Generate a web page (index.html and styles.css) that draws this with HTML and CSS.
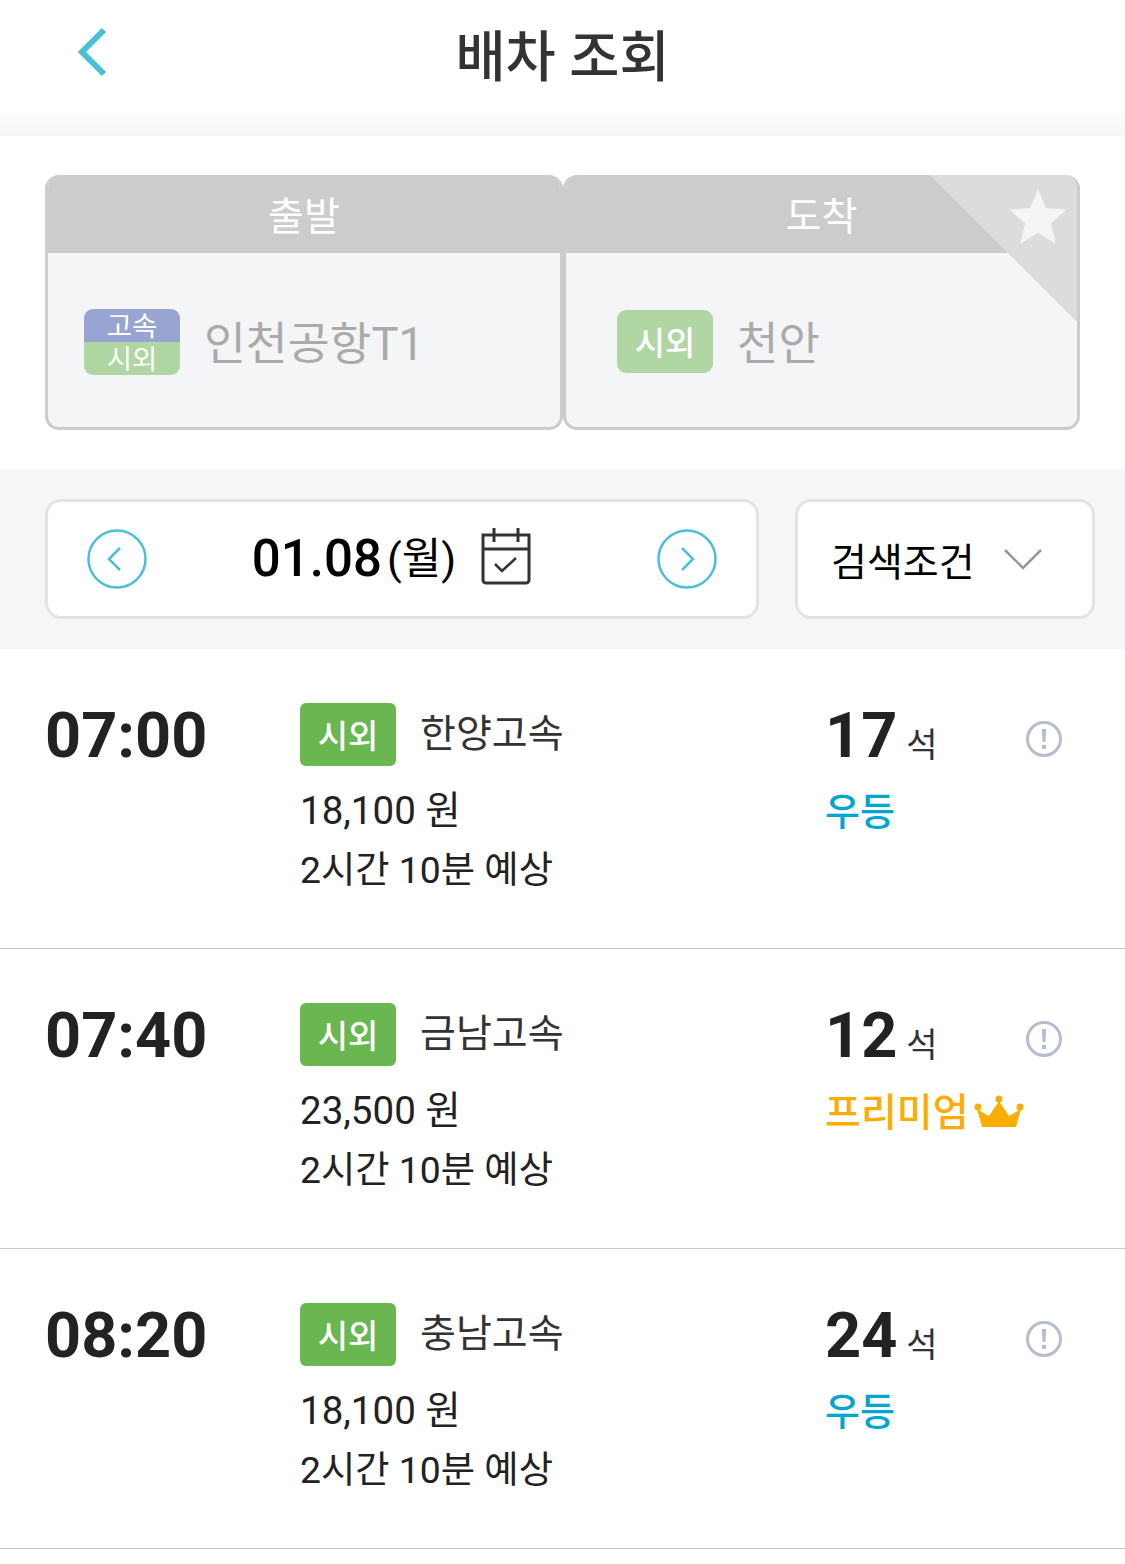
FILE: index.html
```html
<!DOCTYPE html>
<html lang="ko">
<head>
<meta charset="utf-8">
<title>배차 조회</title>
<link rel="stylesheet" href="styles.css">
</head>
<body>
<header class="topbar">
  <svg class="back" viewBox="0 0 30 50" width="30" height="50"><path d="M27 3 5 25l22 22" fill="none" stroke="#4bbfd8" stroke-width="6"/></svg>
  <h1 class="title">배차 조회</h1>
</header>
<section class="route">
  <div class="card">
    <div class="card-head">출발</div>
    <div class="card-body depart">
      <div class="dual"><span class="dual-top">고속</span><span class="dual-bot">시외</span></div>
      <span class="place">인천공항T1</span>
    </div>
  </div>
  <div class="card">
    <div class="card-head">도착</div>
    <div class="card-body arrive">
      <span class="light-badge">시외</span>
      <span class="place">천안</span>
    </div>
    <div class="corner"></div>
    <svg class="star" viewBox="0 0 56 54" width="56" height="54"><path d="M28 1l7.600 18.500 19.900 1.700-15.100 13 4.500 19.500L28 43.500 11.100 53.700l4.500-19.500-15.100-13 19.900-1.700z" fill="#f4f5f7" stroke="#f4f5f7" stroke-width="1" stroke-linejoin="round"/></svg>
  </div>
</section>
<section class="datebar">
  <div class="datebox">
    <svg class="nav" viewBox="0 0 60 60" width="60" height="60"><circle cx="30" cy="30" r="28.500" fill="none" stroke="#4bbfd8" stroke-width="2.500"/><path d="M33 19 22 30l11 11" fill="none" stroke="#4bbfd8" stroke-width="2.500"/></svg>
    <div class="date">
      <span class="date-num">01.08</span><span class="date-day">(월)</span>
      <svg class="cal" viewBox="0 0 52 58" width="52" height="58"><path d="M3 8h46v45a3 3 0 0 1-3 3H6a3 3 0 0 1-3-3zM3 22h46M14 1v14M38 1v14" fill="none" stroke="#333" stroke-width="3"/><path d="M15 37l7 7 14-13" fill="none" stroke="#333" stroke-width="2.500"/></svg>
    </div>
    <svg class="nav" viewBox="0 0 60 60" width="60" height="60"><circle cx="30" cy="30" r="28.500" fill="none" stroke="#4bbfd8" stroke-width="2.500"/><path d="M25 19l11 11-11 11" fill="none" stroke="#4bbfd8" stroke-width="2.500"/></svg>
  </div>
  <div class="filter">
    <span>검색조건</span>
    <svg viewBox="0 0 38 22" width="38" height="22"><path d="M1 2l18 18L37 2" fill="none" stroke="#999" stroke-width="2.500"/></svg>
  </div>
</section>
<main>
  <article class="row">
    <div class="time">07:00</div>
    <div class="info">
      <div class="line-top"><span class="badge">시외</span><span class="company">한양고속</span></div>
      <div class="price">18,100 원</div>
      <div class="duration">2시간 10분 예상</div>
    </div>
    <div class="seats">
      <div class="seat-count"><b>17</b><span>석</span></div>
      <div class="grade standard">우등</div>
    </div>
    <svg class="alert" viewBox="0 0 36 36" width="36" height="36"><circle cx="18" cy="18" r="16.500" fill="none" stroke="#b7bccf" stroke-width="3"/><path d="M15.800 8h4.400l-.8 13h-2.800zM16 24h4v4h-4z" fill="#b7bccf"/></svg>
  </article>
  <article class="row">
    <div class="time">07:40</div>
    <div class="info">
      <div class="line-top"><span class="badge">시외</span><span class="company">금남고속</span></div>
      <div class="price">23,500 원</div>
      <div class="duration">2시간 10분 예상</div>
    </div>
    <div class="seats">
      <div class="seat-count"><b>12</b><span>석</span></div>
      <div class="grade premium">프리미엄<svg class="crown" viewBox="0 0 50 36" width="50" height="36"><path d="M8 32 3 14l12 7 10-15 10 15 12-7-5 18z" fill="#fbad05"/><circle cx="4" cy="12" r="3.500" fill="#fbad05"/><circle cx="25" cy="4" r="3.500" fill="#fbad05"/><circle cx="46" cy="12" r="3.500" fill="#fbad05"/></svg></div>
    </div>
    <svg class="alert" viewBox="0 0 36 36" width="36" height="36"><circle cx="18" cy="18" r="16.500" fill="none" stroke="#b7bccf" stroke-width="3"/><path d="M15.800 8h4.400l-.8 13h-2.800zM16 24h4v4h-4z" fill="#b7bccf"/></svg>
  </article>
  <article class="row">
    <div class="time">08:20</div>
    <div class="info">
      <div class="line-top"><span class="badge">시외</span><span class="company">충남고속</span></div>
      <div class="price">18,100 원</div>
      <div class="duration">2시간 10분 예상</div>
    </div>
    <div class="seats">
      <div class="seat-count"><b>24</b><span>석</span></div>
      <div class="grade standard">우등</div>
    </div>
    <svg class="alert" viewBox="0 0 36 36" width="36" height="36"><circle cx="18" cy="18" r="16.500" fill="none" stroke="#b7bccf" stroke-width="3"/><path d="M15.800 8h4.400l-.8 13h-2.800zM16 24h4v4h-4z" fill="#b7bccf"/></svg>
  </article>
</main>
</body>
</html>
```
FILE: styles.css
```css
* { box-sizing: border-box; }
html, body { margin: 0; padding: 0; background: #fff; }
body {
  width: 1125px;
  height: 1564px;
  overflow: hidden;
  font-family: Roboto, "Noto Sans CJK KR", sans-serif;
  color: #222;
}
.topbar {
  height: 136px;
  position: relative;
  display: flex;
  justify-content: center;
  padding-top: 22px;
  background: linear-gradient(to bottom, #fff 0, #fff 108px, #f6f6f6 136px);
}
.back { position: absolute; left: 77px; top: 27px; }
.title {
  margin: 0;
  font-size: 54.500px;
  line-height: 70px;
  font-weight: 500;
  color: #333;
}
.route {
  height: 333px;
  padding: 39px 45px 0;
  display: flex;
}
.card {
  position: relative;
  width: 518px;
  height: 255px;
  border-radius: 14px;
  overflow: hidden;
  background: #f4f5f7;
  border: 3px solid #ccc;
  border-top: 0;
  display: flex;
  flex-direction: column;
}
.card + .card { width: 517px; }
.card-head {
  height: 78px;
  margin: 0 -3px;
  background: #ccc;
  color: #fff;
  font-size: 39px;
  line-height: 84px;
  text-align: center;
}
.card-body {
  flex: 1;
  display: flex;
  align-items: center;
  padding-top: 4px;
}
.depart { padding-left: 36px; gap: 24px; }
.arrive { padding-left: 51px; gap: 24px; }
.place { font-size: 45.500px; line-height: 60px; color: #aaa; margin-top: 6px; }
.arrive .place { font-size: 45px; }
.dual {
  width: 96px;
  height: 66px;
  border-radius: 9px;
  overflow: hidden;
  display: flex;
  flex-direction: column;
  color: #fff;
  font-size: 27.500px;
  text-align: center;
}
.dual-top { height: 33px; line-height: 36px; background: #98a5d3; }
.dual-bot { height: 33px; line-height: 35px; background: #b0d6a3; }
.light-badge {
  width: 96px;
  height: 63px;
  border-radius: 9px;
  background: #b0d6a3;
  color: #fff;
  font-size: 33px;
  font-weight: 500;
  line-height: 68px;
  text-align: center;
  margin-top: -2px;
}
.corner {
  position: absolute;
  right: -3px;
  top: 0;
  width: 150px;
  height: 150px;
  background: #dcdcdc;
  clip-path: polygon(0 0, 100% 0, 100% 100%);
}
.star { position: absolute; right: 11px; top: 14px; }
.datebar {
  height: 180px;
  background: #f5f6f8;
  padding: 30px 30px 30px 45px;
  display: flex;
  gap: 36px;
}
.datebox, .filter {
  height: 120px;
  background: #fff;
  border: 3px solid #e2e3e5;
  border-radius: 16px;
  display: flex;
  align-items: center;
}
.datebox {
  width: 714px;
  justify-content: space-between;
  padding: 0 39px;
}
.date { display: flex; align-items: center; color: #000; }
.date-num { font-size: 51px; font-weight: 500; line-height: 60px; margin-left: 2px; }
.date-day { font-size: 43px; line-height: 60px; margin-left: 5px; }
.cal { margin: -6px 22px 0 24px; }
.filter {
  width: 300px;
  padding-left: 33px;
  gap: 29px;
  font-size: 39px;
  color: #000;
}
.row {
  height: 300px;
  border-bottom: 1px solid #ccc;
  padding: 54px 0 0 45px;
  display: grid;
  grid-template-columns: 255px 525px 201px 36px;
  align-items: start;
}
.time {
  font-size: 63px;
  font-weight: 700;
  line-height: 64px;
  padding-top: 1px;
}
.line-top { display: flex; align-items: center; gap: 24px; height: 63px; }
.badge {
  width: 96px;
  height: 63px;
  border-radius: 6px;
  background: #6ab651;
  color: #fff;
  font-size: 33px;
  font-weight: 500;
  line-height: 67px;
  text-align: center;
}
.company { font-size: 39px; line-height: 67px; color: #333; }
.price { font-size: 38.500px; line-height: 60px; margin-top: 15px; }
.duration { font-size: 37.300px; line-height: 60px; margin-top: -1px; }
.seat-count { display: flex; align-items: baseline; height: 64px; padding-top: 1px; }
.seat-count b { font-size: 63px; font-weight: 700; line-height: 64px; }
.seat-count span { font-size: 34px; margin-left: 9px; color: #333; }
.grade {
  line-height: 60px;
  margin-top: 15px;
  display: flex;
  align-items: center;
  font-weight: 500;
}
.standard { color: #00a5d0; font-size: 38px; }
.premium { color: #fbad05; font-size: 39px; margin-top: 16px; }
.crown { margin-left: 5px; }
.alert { margin-top: 18px; }
```
